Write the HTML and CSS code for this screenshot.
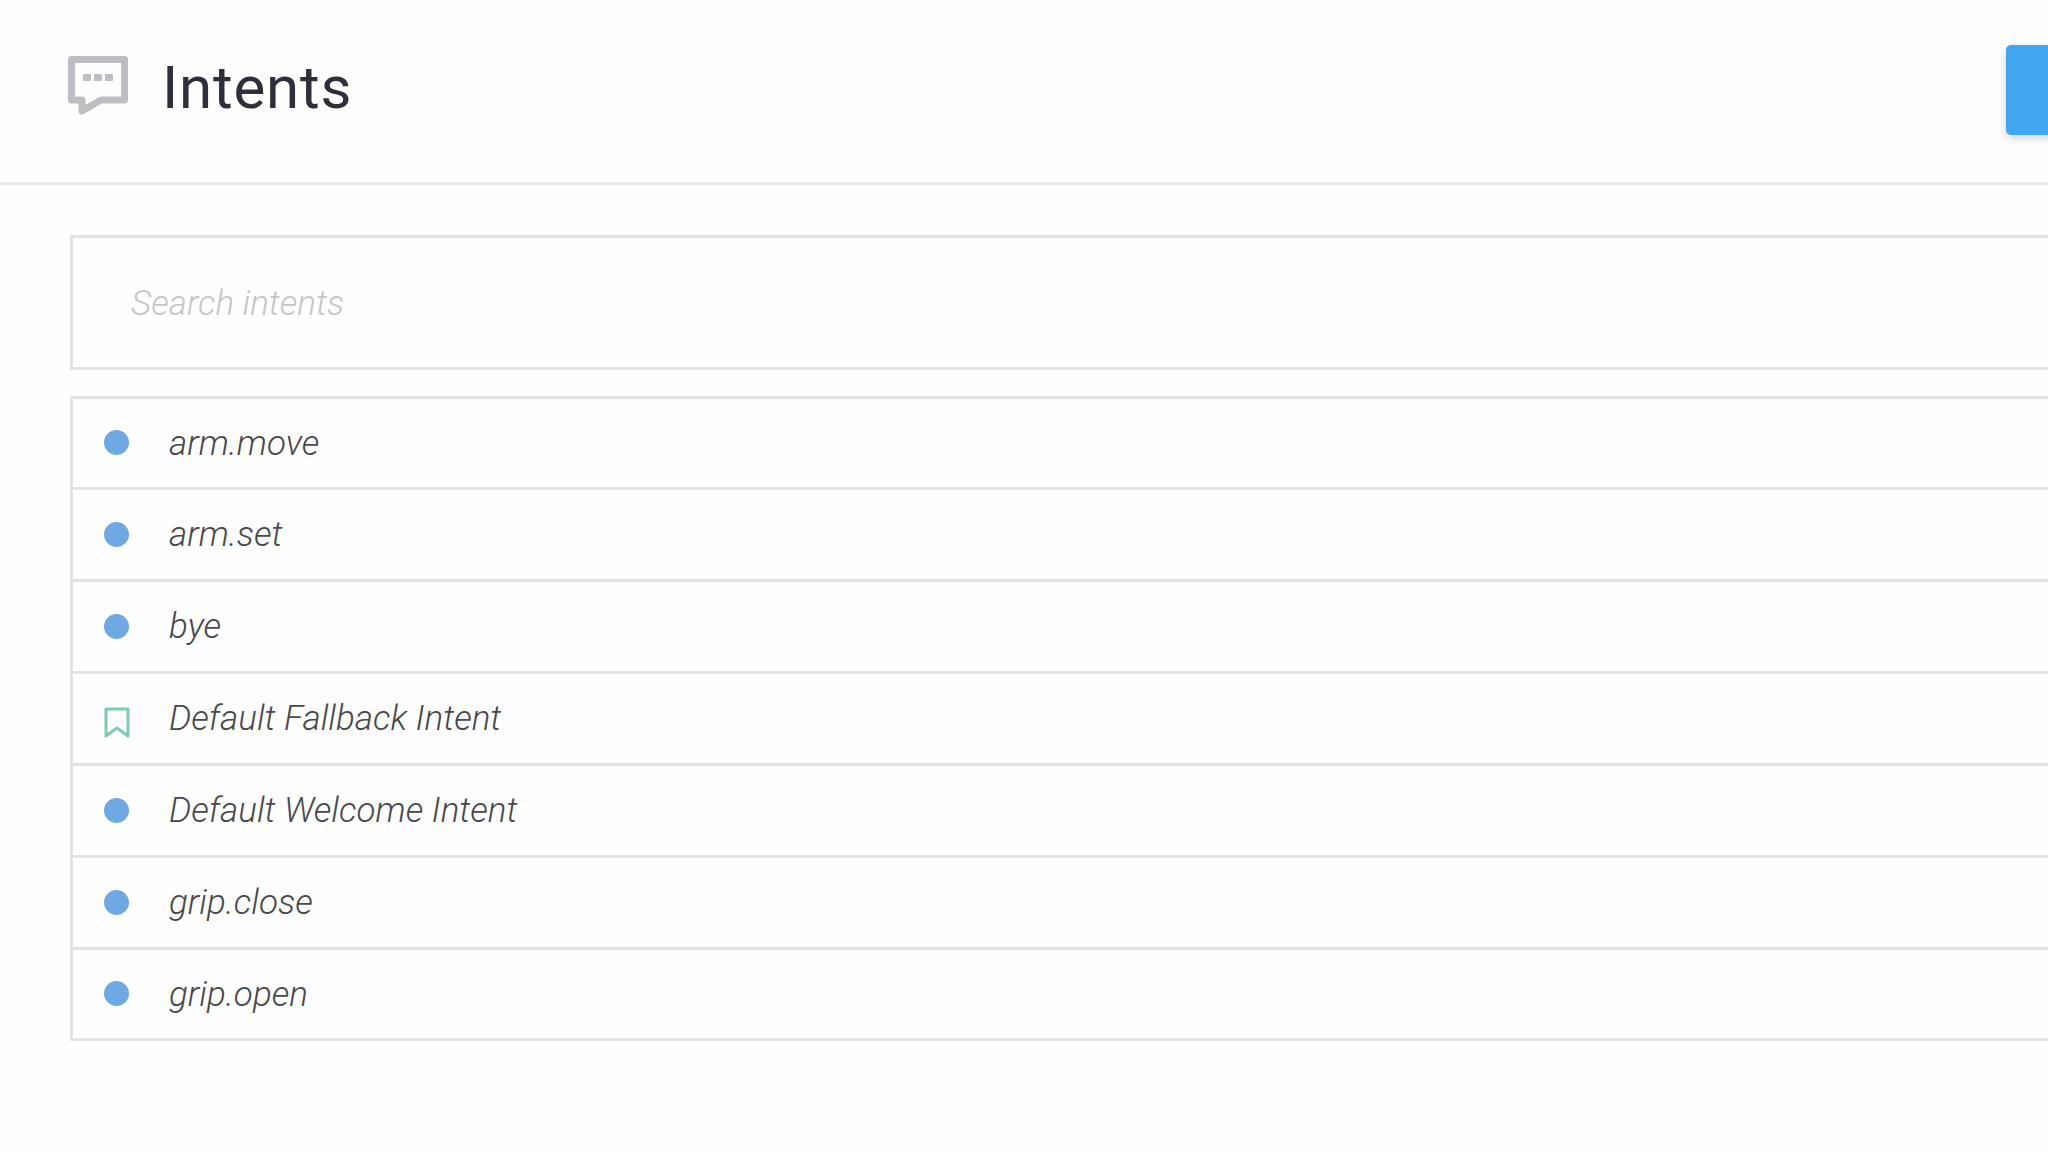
FILE: index.html
```html
<!DOCTYPE html>
<html lang="en">
  <head>
    <meta charset="UTF-8" />
    <title>Intents</title>
    <link rel="stylesheet" href="styles.css">
  </head>
  <body>
    <div id="header">
      <svg class="title-icon" width="62" height="62" viewBox="0 0 62 62">
        <path d="M3.5 3.5H56.5V44H33L14 55V44H3.5Z" fill="none" stroke="#bdbec2" stroke-width="7" stroke-linejoin="round" />
        <rect x="15" y="18" width="8" height="7" rx="1" fill="#bdbec2" />
        <rect x="26" y="18" width="8" height="7" rx="1" fill="#bdbec2" />
        <rect x="37" y="18" width="8" height="7" rx="1" fill="#bdbec2" />
      </svg>
      <h1>Intents</h1>
      <button class="create-btn"></button>
    </div>

    <div id="content">
      <div id="search">
        <input type="text" placeholder="Search intents" />
      </div>
      <div id="intents">
        <div class="intent"><span class="dot"></span><span class="name">arm.move</span></div>
        <div class="intent"><span class="dot"></span><span class="name">arm.set</span></div>
        <div class="intent"><span class="dot"></span><span class="name">bye</span></div>
        <div class="intent">
          <svg class="bookmark" width="26" height="31" viewBox="0 0 26 31">
            <path d="M2 2H24V29L13 21L2 29Z" fill="none" stroke="#7fcbb0" stroke-width="3" stroke-linejoin="round" />
          </svg>
          <span class="name">Default Fallback Intent</span>
        </div>
        <div class="intent"><span class="dot"></span><span class="name">Default Welcome Intent</span></div>
        <div class="intent"><span class="dot"></span><span class="name">grip.close</span></div>
        <div class="intent"><span class="dot"></span><span class="name">grip.open</span></div>
      </div>
    </div>
  </body>
</html>
```

FILE: styles.css
```css
* {
  margin: 0;
  padding: 0;
  box-sizing: border-box;
  font-family: Roboto, "Liberation Sans", sans-serif;
}
html,
body {
  height: 100%;
  overflow: hidden;
}
body {
  background-color: #fefefe;
}
#header {
  display: flex;
  align-items: center;
  height: 185px;
  padding-left: 68px;
  border-bottom: 3px solid #e8e9eb;
}
.title-icon {
  flex-shrink: 0;
  margin-top: -9px;
}
#header h1 {
  margin-left: 32px;
  margin-top: -8px;
  font-size: 60px;
  font-weight: 400;
  letter-spacing: 0.8px;
  color: #2d2f3b;
}
.create-btn {
  flex-shrink: 0;
  width: 320px;
  height: 90px;
  margin-left: auto;
  margin-right: -278px;
  margin-top: -2px;
  border: none;
  border-radius: 5px;
  background-color: #42a5f0;
  box-shadow: 0 3px 8px rgba(0, 0, 0, 0.18);
}
#content {
  margin-left: 70px;
  margin-right: -20px;
}
#search {
  height: 135px;
  margin-top: 50px;
  padding-left: 58px;
  padding-top: 1px;
  display: flex;
  align-items: center;
  border: 3px solid #e2e3e6;
}
#search input {
  width: 100%;
  border: none;
  outline: none;
  background: none;
  font-size: 35px;
  font-weight: 300;
  font-style: italic;
}
#search input::placeholder {
  color: #c4c5c9;
}
#intents {
  margin-top: 26px;
  border: 3px solid #e2e3e6;
}
.intent {
  display: flex;
  align-items: center;
  height: 92px;
  padding-left: 31px;
  border-bottom: 3px solid #e2e3e6;
}
.intent:first-child {
  height: 91px;
}
.intent:last-child {
  height: 88px;
  border-bottom: none;
}
.dot {
  flex-shrink: 0;
  width: 25px;
  height: 25px;
  margin-top: -1px;
  border-radius: 50%;
  background-color: #6fa9e3;
}
.bookmark {
  flex-shrink: 0;
  margin-top: 7px;
  margin-right: -1px;
}
.name {
  margin-left: 40px;
  font-size: 35px;
  font-weight: 300;
  font-style: italic;
  color: #47484e;
}
```
